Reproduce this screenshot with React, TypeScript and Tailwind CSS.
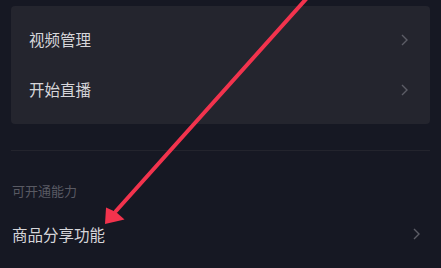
function Chevron({ className }: { className?: string }) {
    return (
        <svg width="7" height="12" viewBox="0 0 7 12" className={className}>
            <path d="M1 1 L6 6 L1 11" fill="none" stroke="currentColor" strokeWidth="1.4" />
        </svg>
    )
}

function Row({ label }: { label: string }) {
    return (
        <div className="flex h-[50px] items-center justify-between pl-[18px] pr-[22px]">
            <span className="text-[15.5px] text-[#d6d6da]">{label}</span>
            <Chevron className="text-[#5c5d66]" />
        </div>
    )
}

export default function App() {
    return (
        <div
            className="relative h-[268px] w-[441px] overflow-hidden bg-[#161823]"
            style={{ fontFamily: '"Noto Sans CJK SC", "Noto Sans", sans-serif' }}
        >
            <div className="mx-[11px] mt-[6px] h-[118px] rounded-[4px] bg-[#24252e] pt-[9px]">
                <Row label="视频管理" />
                <Row label="开始直播" />
            </div>

            <div className="mx-[11px] mt-[26px] h-px bg-[#23242d]" />

            <div className="mt-[31px] pl-[12px] text-[13px] leading-[18px] text-[#595a63]">
                可开通能力
            </div>

            <div className="mt-[24px] flex h-[20px] items-center justify-between pl-[12px] pr-[21px]">
                <span className="text-[15.5px] leading-[20px] text-[#d6d6da]">商品分享功能</span>
                <Chevron className="text-[#5c5d66]" />
            </div>

            {/* annotation arrow */}
            <svg
                className="pointer-events-none absolute left-0 top-0"
                width="441"
                height="268"
                viewBox="0 0 441 268"
            >
                <line x1="307" y1="-2" x2="116" y2="211" stroke="#f2334d" strokeWidth="4" strokeLinecap="round" />
                <polygon points="105,224 124.5,219.5 116,212 106,207.5" fill="#f2334d" />
            </svg>
        </div>
    )
}
